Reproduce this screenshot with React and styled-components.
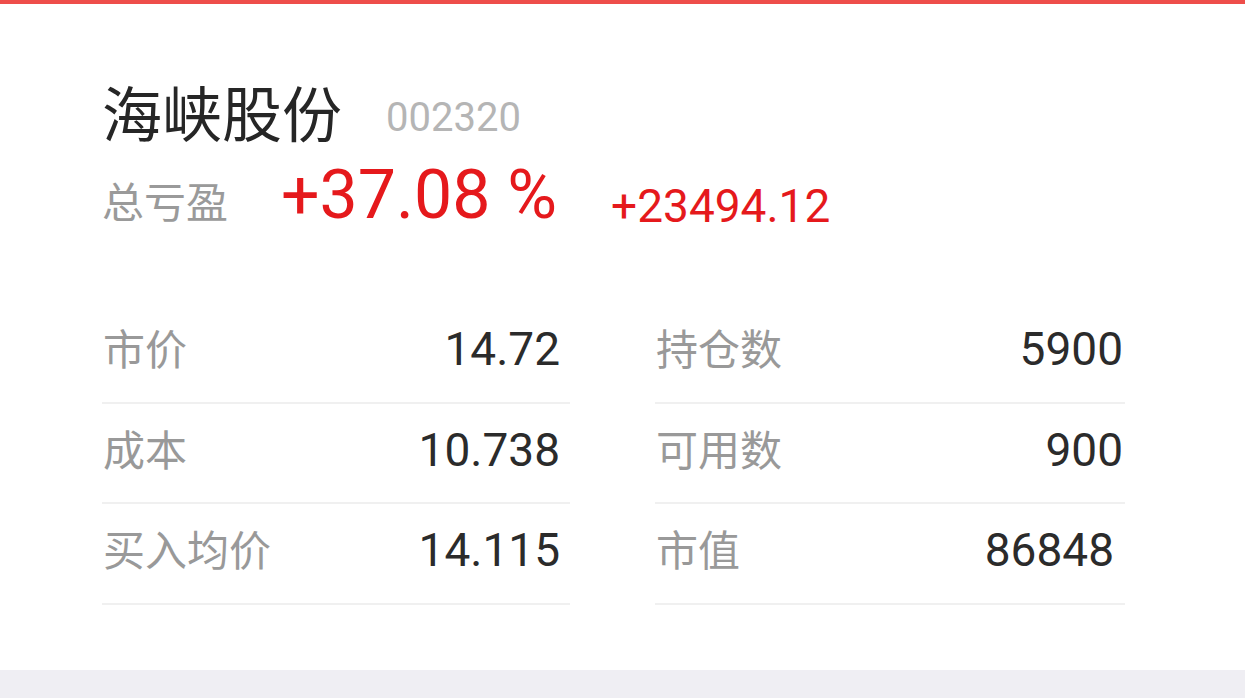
import React from "react";
import styled, { createGlobalStyle } from "styled-components";

const GlobalStyle = createGlobalStyle`
  html, body {
    margin: 0;
    padding: 0;
    background: #efeef3;
  }
  body {
    font-family: Roboto, "Noto Sans CJK SC", sans-serif;
  }
`;

const rows = [
  [
    { label: "市价", value: "14.72" },
    { label: "持仓数", value: "5900" },
  ],
  [
    { label: "成本", value: "10.738" },
    { label: "可用数", value: "900" },
  ],
  [
    { label: "买入均价", value: "14.115" },
    { label: "市值", value: "86848", inset: 9 },
  ],
];

const App = () => {
  return (
    <>
      <GlobalStyle />
      <Page>
        <TopBar />
        <Card>
          <TitleRow>
            <StockName>海峡股份</StockName>
            <StockCode>002320</StockCode>
          </TitleRow>
          <ProfitRow>
            <ProfitLabel>总亏盈</ProfitLabel>
            <ProfitRate>+37.08 %</ProfitRate>
            <ProfitAmount>+23494.12</ProfitAmount>
          </ProfitRow>
          <Grid>
            {rows.map((pair, i) =>
              pair.map((cell, j) => (
                <Cell key={`${i}-${j}`} $right={j === 1}>
                  <Label>{cell.label}</Label>
                  <Value $inset={cell.inset}>{cell.value}</Value>
                </Cell>
              ))
            )}
          </Grid>
        </Card>
      </Page>
    </>
  );
};

export default App;

const Page = styled.div`
  width: 100%;
  height: 698px;
  display: flex;
  flex-direction: column;
`;

const TopBar = styled.div`
  height: 4px;
  background: #ee4d4a;
`;

const Card = styled.div`
  background: #fff;
  height: 666px;
  padding: 75px 0 0 102px;
  box-sizing: border-box;
`;

const TitleRow = styled.div`
  height: 64px;
  line-height: 64px;
  white-space: nowrap;
`;

const StockName = styled.span`
  font-family: "Noto Sans CJK SC", sans-serif;
  font-size: 60px;
  color: #262626;
  letter-spacing: 0;
`;

const StockCode = styled.span`
  display: inline-block;
  font-family: Roboto, sans-serif;
  font-size: 40px;
  color: #b5b5b5;
  margin-left: 44px;
  vertical-align: 6px;
`;

const ProfitRow = styled.div`
  height: 80px;
  line-height: 80px;
  margin-top: 12px;
  white-space: nowrap;
`;

const ProfitLabel = styled.span`
  font-family: "Noto Sans CJK SC", sans-serif;
  font-size: 42px;
  color: #9a9a9a;
`;

const ProfitRate = styled.span`
  display: inline-block;
  font-family: Roboto, sans-serif;
  font-size: 68px;
  color: #e5191c;
  margin-left: 53px;
  vertical-align: 0;
`;

const ProfitAmount = styled.span`
  display: inline-block;
  font-family: Roboto, sans-serif;
  font-size: 46px;
  color: #e5191c;
  margin-left: 54px;
  vertical-align: -4px;
`;

const Grid = styled.div`
  display: grid;
  grid-template-columns: 468px 470px;
  column-gap: 85px;
  margin-top: 68px;
`;

const Cell = styled.div`
  display: flex;
  align-items: baseline;
  justify-content: space-between;
  height: 100.5px;
  border-bottom: 2px solid #f0f0f0;
  box-sizing: border-box;
  padding: 21px ${({ $right }) => ($right ? "2px" : "10px")} 0 1px;
`;

const Label = styled.span`
  font-family: "Noto Sans CJK SC", sans-serif;
  font-size: 42px;
  line-height: 46px;
  color: #999;
`;

const Value = styled.span`
  font-family: Roboto, sans-serif;
  font-size: 46px;
  line-height: 46px;
  color: #2b2b2b;
  margin-right: ${({ $inset }) => ($inset ? `${$inset}px` : "0")};
`;
